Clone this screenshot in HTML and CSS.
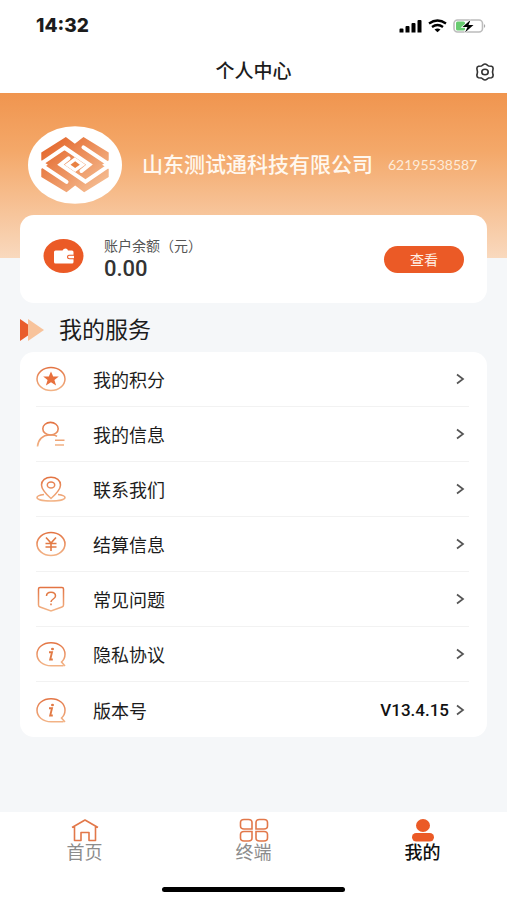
FILE: index.html
```html
<!DOCTYPE html>
<html lang="zh-CN">
<head>
<meta charset="utf-8">
<meta name="viewport" content="width=device-width, initial-scale=1">
<title>个人中心</title>
<link rel="stylesheet" href="styles.css">
</head>
<body>
<svg class="defs" aria-hidden="true">
  <defs>
    <linearGradient id="fade" gradientUnits="userSpaceOnUse" x1="0" y1="0" x2="0" y2="26">
      <stop offset="0" stop-color="#e2703f"/><stop offset="1" stop-color="#f3b689"/>
    </linearGradient>
    <symbol id="chevron" viewBox="0 0 10 12"><path d="M2 1.500 8 6 2 10.500" fill="none" stroke="#555" stroke-width="1.700"/></symbol>
    <symbol id="info" viewBox="0 0 30 26">
      <path d="M29 25 25.500 21C27.800 19 29 16 29 13.200 29 6.500 23 1.800 15 1.800S1 6.500 1 13.200 7 24.700 15 24.700H27.500" fill="none" stroke="url(#fade)" stroke-width="1.500"/>
      <path d="M13 11.200h3l-1.800 7.300h2.600" fill="none" stroke="#e27a45" stroke-width="1.900"/>
      <ellipse cx="16.500" cy="8" rx="1.500" ry="1.300" fill="#e27a45"/>
    </symbol>
  </defs>
</svg>

<header class="top">
  <div class="status">
    <span class="clock">14:32</span>
    <svg class="signals" viewBox="0 0 88 14" aria-hidden="true">
      <path d="M.5 10.500q0-1 1-1h2q1 0 1 1v3H.5zM6.500 8q0-1 1-1h2q1 0 1 1v5.500h-4zM12.500 5q0-1 1-1h2q1 0 1 1v8.500h-4zM18.500 2q0-1 1-1h2q1 0 1 1v11.500h-4z"/>
      <path d="M30 4.500q8.500-6 17 0M33 8q5.500-4 11 0" fill="none" stroke="#000" stroke-width="2.300"/>
      <path d="M35.500 10.500q3-2 6 0l-3 2.700z"/>
      <rect x="55" y="1" width="28.500" height="12" rx="3.500" fill="#fff" stroke="#bcbcbc" stroke-width="1.600"/>
      <rect x="57" y="2.500" width="9" height="9" rx="1.500" fill="#68cc70"/>
      <path d="M85 5q2.500 2 0 4z" fill="#aaa"/>
      <path d="M71.500 1 63.500 8h5l-2.500 5.500 8.500-7.500h-5z" stroke="#fff" stroke-width="1.500" paint-order="stroke"/>
    </svg>
  </div>
  <div class="titlebar">
    <h1>个人中心</h1>
    <button class="settings" aria-label="设置">
      <svg viewBox="0 0 20 18" fill="none" stroke="#333" stroke-width="1.600" stroke-linejoin="round"><path d="M8 1.800Q10 .2 12 1.800L13.500 3 16.500 3.300Q18.500 4 18 6.200L17.500 9l.5 2.800q.5 2.200-1.500 2.900l-3 .3-1.500 1.200q-2 1.600-4 0L6.500 15l-3-.3Q1.500 14 2 11.800L2.500 9 2 6.200Q1.500 4 3.500 3.300L6.500 3z"/><ellipse cx="10" cy="9" rx="3.200" ry="2.800"/></svg>
    </button>
  </div>
</header>

<main>
  <section class="hero">
    <svg class="avatar" viewBox="0 0 283 234" role="img" aria-label="头像">
      <defs><linearGradient id="mark" x1="0" y1="0" x2="1" y2="1"><stop offset=".1" stop-color="#e4682d"/><stop offset=".9" stop-color="#f5bd92"/></linearGradient></defs>
      <ellipse cx="141.500" cy="117" rx="141.500" ry="117" fill="#fff"/>
      <path d="M40 79 114 33l27 20 26-20 76 46v74l-74 46-27-20-26 20-76-46z" fill="url(#mark)"/>
      <g fill="none" stroke="#fff" stroke-width="12" stroke-linecap="round">
        <path d="M35 116 110 65l75 51-24 19M248 116l-75 51-75-51 24-19"/>
        <path d="M167 64l78 52M116 168 38 116"/>
      </g>
      <path d="M38 102 60 116 38 130zM245 102 223 116 245 130z" fill="#fff"/>
      <path d="M141 94 173 116 142 138 110 116z" fill="#fff"/>
      <path d="M142 106 156 116 142 126 128 116z" fill="#e98143"/>
    </svg>
    <h2 class="company">山东测试通科技有限公司</h2>
    <span class="account">62195538587</span>
  </section>

  <section class="card balance">
    <svg class="wallet" viewBox="0 0 40 34" aria-hidden="true">
      <ellipse cx="20" cy="17" rx="20" ry="17" fill="#eb5a26"/>
      <path d="M12 11.500h7q1-2 3-2t2.500 2h4q1.500 0 1.500 1.500V23q0 1.500-1.500 1.500H12q-1.500 0-1.500-1.500V13q0-1.500 1.500-1.500z" fill="#fff"/><path d="M30.500 16.300H26q-2 0-2 1.700t2 1.700h4.500" fill="#fff" stroke="#eb5a26" stroke-width="1.100"/>
    </svg>
    <div class="amount"><span class="label">账户余额（元）</span><strong>0.00</strong></div>
    <button class="view">查看</button>
  </section>

  <h2 class="section"><svg viewBox="0 0 24 22" aria-hidden="true"><path d="M0 0 16 11 0 22z" fill="#e95d2b"/><path d="M8 0 24 11 8 22z" fill="#f8c39b"/></svg>我的服务</h2>

  <nav class="card services" aria-label="我的服务">
    <a href="#points"><svg class="icon" viewBox="0 0 30 26"><ellipse cx="15" cy="13" rx="14" ry="11.500" fill="none" stroke="url(#fade)" stroke-width="1.500"/><path d="m15 5.500 2.200 5h5.600L18.400 14l1.700 5.500L15 16.300 9.900 19.500 11.600 14 7.200 10.500h5.600z" fill="#e8703d"/></svg><span>我的积分</span><svg class="go"><use href="#chevron"/></svg></a>
    <a href="#profile"><svg class="icon" viewBox="0 0 30 26" fill="none" stroke="url(#fade)" stroke-width="1.600"><ellipse cx="14.500" cy="7.700" rx="7.700" ry="6.300"/><path d="M1.500 25.500C2 18.500 7 14 13 14h3q3 0 5 1.300M19 19.200h9.500M19 24h9"/></svg><span>我的信息</span><svg class="go"><use href="#chevron"/></svg></a>
    <a href="#contact"><svg class="icon" viewBox="0 0 30 26" fill="none" stroke="url(#fade)" stroke-width="1.500"><path d="M15 22.500Q5.500 14 5.500 9C5.500 4.500 9.500 1.200 15 1.200S24.500 4.500 24.500 9Q24.500 14 15 22.500z"/><ellipse cx="15" cy="9" rx="3.700" ry="3"/><path d="M8 18.500c-5 .6-7 1.500-7 3 0 2 6 3.500 14 3.500s14-1.500 14-3.500c0-1.500-2-2.400-7-3"/></svg><span>联系我们</span><svg class="go"><use href="#chevron"/></svg></a>
    <a href="#settlement"><svg class="icon" viewBox="0 0 30 26" fill="none" stroke="url(#fade)" stroke-width="1.600"><ellipse cx="15" cy="13" rx="14" ry="11.500"/><path d="m10 6.500 5 5.500 5-5.500M15 12v8M9.500 12.500h11M9.500 16h11" stroke="#e27a45"/></svg><span>结算信息</span><svg class="go"><use href="#chevron"/></svg></a>
    <a href="#faq"><svg class="icon" viewBox="0 0 30 26" fill="none" stroke="url(#fade)" stroke-width="1.500"><path d="M4 1.500h22q1.500 0 1.500 1.500v16q0 1.500-1.500 2L15 25 4 21q-1.500-.5-1.500-2V3Q2.500 1.500 4 1.500z"/><path d="M10.500 10c0-5 9-5 9 0 0 3-4.500 3-4.500 6M15 17.500v1.800" stroke="#e27a45"/></svg><span>常见问题</span><svg class="go"><use href="#chevron"/></svg></a>
    <a href="#privacy"><svg class="icon"><use href="#info"/></svg><span>隐私协议</span><svg class="go"><use href="#chevron"/></svg></a>
    <a href="#version"><svg class="icon"><use href="#info"/></svg><span>版本号</span><b>V13.4.15</b><svg class="go"><use href="#chevron"/></svg></a>
  </nav>
</main>

<footer class="bottom">
  <nav class="tabs" aria-label="主导航">
    <a href="#home"><svg viewBox="0 0 30 24" fill="none" stroke="#e2784a" stroke-width="1.600" stroke-linejoin="round"><path d="M2 9.500 15 2l13 7.500M4.500 8.500v14h6.500v-8h8v8h6.500v-14"/></svg>首页</a>
    <a href="#terminal"><svg viewBox="0 0 30 24" fill="none" stroke="#e2784a" stroke-width="1.600"><path d="M5 1.500h4.500q3.500 0 3.500 3V11H5q-3.500 0-3.500-3V4.500q0-3 3.500-3zM20.500 1.500H25q3.500 0 3.500 3V8q0 3-3.500 3h-8V4.500q0-3 3.500-3zM5 13.500h8V20q0 3-3.500 3H5q-3.500 0-3.500-3v-3.500q0-3 3.500-3zM17 13.500h8q3.500 0 3.500 3V20q0 3-3.500 3h-4.500q-3.500 0-3.500-3z"/></svg>终端</a>
    <a href="#me" class="active" aria-current="page"><svg viewBox="0 0 30 24" fill="#eb5a26"><ellipse cx="15" cy="7.500" rx="7" ry="6.500"/><rect x="4" y="15" width="22" height="8.500" rx="4.200"/></svg>我的</a>
  </nav>
  <div class="home-bar"></div>
</footer>
</body>
</html>
```
FILE: styles.css
```css
* { box-sizing: border-box; }
body {
  margin: 0;
  min-height: 100vh;
  display: flex;
  flex-direction: column;
  background: #f5f7f9;
  color: #1c1c1c;
  font-family: "Liberation Sans", "Noto Sans CJK SC", sans-serif;
}
h1, h2 { margin: 0; font-weight: 400; }
a { color: inherit; text-decoration: none; }
button { border: 0; padding: 0; font: inherit; }
.defs { position: absolute; width: 0; height: 0; }

.top { background: #fff; }
.status {
  height: 50px;
  padding: 2px 20px 0 36px;
  display: flex;
  align-items: center;
  justify-content: space-between;
}
.clock { font: 800 19px/24px Inter, sans-serif; }
.signals { width: 88px; height: 14px; }
.titlebar {
  height: 43px;
  padding: 0 12px;
  display: grid;
  grid-template-columns: 20px 1fr 20px;
  align-items: center;
}
.titlebar h1 { grid-column: 2; text-align: center; font-size: 19px; line-height: 42px; font-weight: 500; }
.settings { background: none; width: 20px; height: 24px; }
.settings svg { display: block; width: 20px; height: 18px; }

.hero {
  height: 165px;
  padding: 33px 28px 0;
  display: flex;
  align-items: flex-start;
  background: linear-gradient(#f0954f, #f4a869 35%, #f9d9be);
  color: #fff;
}
.avatar { width: 94px; height: 78px; flex: none; margin-right: 20px; }
.company { font-size: 21px; line-height: 78px; font-weight: 500; white-space: nowrap; color: #fff8ef; }
.account { margin-left: 15px; font: 14px/78px Lato, sans-serif; color: #fdebd9; }

.card { margin: 0 20px; background: #fff; border-radius: 14px; }
.balance {
  margin-top: -43px;
  height: 88px;
  padding: 0 23px;
  display: flex;
  align-items: center;
}
.wallet { width: 41px; height: 34px; margin: 0 20px 6px 0; }
.amount { flex: 1; display: flex; flex-direction: column; }
.label { font-size: 14px; line-height: 20px; color: #555; }
.amount strong { font: 500 22px/26px Roboto, sans-serif; color: #333; }
.view {
  width: 80px;
  height: 27px;
  border-radius: 14px;
  background: #eb5a26;
  color: #ffefe4;
  font-size: 14px;
}

.section {
  height: 49px;
  padding: 4px 20px 0;
  display: flex;
  align-items: center;
  gap: 15px;
  font-size: 23px;
  line-height: 30px;
}
.section svg { width: 24px; height: 22px; }

.services { padding: 0 18px 0 16px; }
.services a {
  height: 55px;
  display: flex;
  align-items: center;
  border-bottom: 1px solid #f2f2f2;
  font-size: 18px;
}
.services a:last-child { border-bottom: 0; }
.services span { flex: 1; }
.services b { font: 500 17px/24px Roboto, sans-serif; color: #111; margin-right: 6px; }
.icon { width: 30px; height: 26px; margin-right: 27px; }
.go { width: 10px; height: 12px; margin-right: 4px; }

.bottom { margin-top: auto; background: #fff; }
.tabs { display: grid; grid-template-columns: repeat(3, 1fr); height: 75px; padding-top: 6px; }
.tabs a {
  display: flex;
  flex-direction: column;
  align-items: center;
  font-size: 18px;
  line-height: 22px;
  color: #8c8c8c;
}
.tabs svg { width: 30px; height: 24px; }
.tabs .active { color: #111; font-weight: 500; }
.home-bar { width: 36%; height: 5px; margin: 0 auto 8px; border-radius: 3px; background: #000; }
```
